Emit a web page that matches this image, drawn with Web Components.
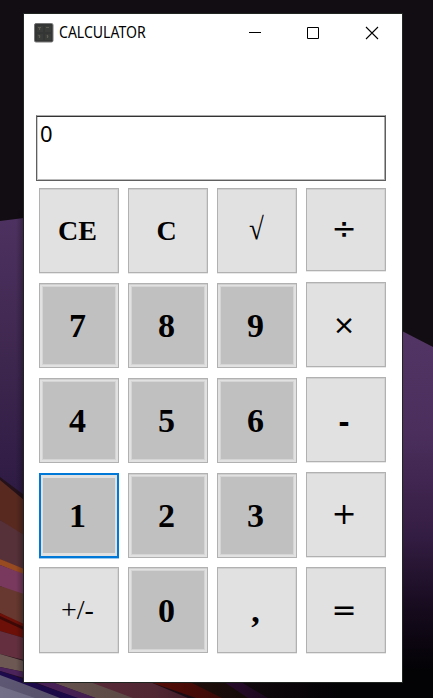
<!DOCTYPE html>
<html lang="en">
<head>
<meta charset="utf-8">
<title>CALCULATOR</title>
<style>
html,body{margin:0;width:433px;height:698px;overflow:hidden;background:#120d13}
</style>
</head>
<body>
<desk-top>
  <calc-window caption="CALCULATOR">
    <calc-display>0</calc-display>
    <calc-pad>
      <calc-column>
        <calc-key small>CE</calc-key><calc-key digit>7</calc-key><calc-key digit>4</calc-key><calc-key digit focused>1</calc-key><calc-key plain>+/-</calc-key>
      </calc-column>
      <calc-column>
        <calc-key small>C</calc-key><calc-key digit>8</calc-key><calc-key digit>5</calc-key><calc-key digit>2</calc-key><calc-key digit low>0</calc-key>
      </calc-column>
      <calc-column>
        <calc-key root>√</calc-key><calc-key digit>9</calc-key><calc-key digit>6</calc-key><calc-key digit>3</calc-key><calc-key low>,</calc-key>
      </calc-column>
      <calc-column operators>
        <calc-key op>÷</calc-key><calc-key op times>×</calc-key><calc-key op minus>-</calc-key><calc-key op>+</calc-key><calc-key op equals>=</calc-key>
      </calc-column>
    </calc-pad>
  </calc-window>
</desk-top>
<script>
const define = (name, html, init) => customElements.define(name, class extends HTMLElement {
  constructor() {
    super();
    this.attachShadow({mode: 'open'}).innerHTML = html;
  }
  connectedCallback() { if (init) init(this, this.shadowRoot); }
});

define('desk-top', `
<style>
:host{display:grid;box-sizing:border-box;width:433px;height:698px;padding:14px 31px 16px 24px;position:relative}
svg.wall{position:absolute;inset:0}
slot{display:contents}
</style>
<svg class="wall" width="433" height="698" viewBox="0 0 433 698" aria-hidden="true">
  <defs>
    <linearGradient id="l" x1="0" y1="218" x2="0" y2="500" gradientUnits="userSpaceOnUse"><stop offset="0" stop-color="#4d3160"/><stop offset=".5" stop-color="#3e274f"/><stop offset="1" stop-color="#2d1a43"/></linearGradient>
    <linearGradient id="r" x1="0" y1="332" x2="0" y2="670" gradientUnits="userSpaceOnUse"><stop offset="0" stop-color="#533565"/><stop offset=".3" stop-color="#4b2e5c"/><stop offset=".6" stop-color="#341d43"/><stop offset=".83" stop-color="#150a1c"/><stop offset="1" stop-color="#030205"/></linearGradient>
    <linearGradient id="f"><stop offset="0" stop-color="#030205" stop-opacity="0"/><stop offset=".45" stop-color="#030205" stop-opacity=".2"/><stop offset="1" stop-color="#030205"/></linearGradient>
    <linearGradient id="s"><stop offset="0" stop-color="#000" stop-opacity="0"/><stop offset="1" stop-color="#000" stop-opacity=".3"/></linearGradient>
  </defs>
  <rect width="433" height="698" fill="#120d13"/>
  <path d="M0 221L24 218V520H0Z" fill="url(#l)"/>
  <path d="M402 331L433 347V698H402Z" fill="url(#r)"/>
  <path d="M0 477L24 495L433 698H0Z" fill="#241119"/>
  <path d="M0 480L24 500V537L0 520Z" fill="#58291f"/>
  <path d="M0 520L24 535V571L0 559Z" fill="#573139"/>
  <path d="M0 559L24 569V575L0 565Z" fill="#984a20"/>
  <path d="M0 565L24 574V597L0 586Z" fill="#79395f"/>
  <path d="M0 586L24 594V627L0 613Z" fill="#66382f"/>
  <path d="M0 613L24 624L190 682L240 698H196L150 682L24 638L0 631Z" fill="#6d1008"/>
  <path d="M0 616L24 627V630L0 619Z" fill="#3c0907"/>
  <path d="M0 631L24 638L150 682L188 698H128L60 676L24 660L0 654Z" fill="#64303f"/>
  <path d="M0 654L24 661L90 682L133 698H95L24 672L0 667Z" fill="#6d5854"/>
  <path d="M0 667L24 672L96 698H76L24 678L0 671Z" fill="#4c235b"/>
  <path d="M0 671L24 679L78 698H59L24 686L0 678Z" fill="#1d0a4d"/>
  <path d="M0 675L24 684L60 698H0Z" fill="#5e5773"/>
  <path d="M0 686L35 698H0Z" fill="#746f89"/>
  <path d="M190 682H222L265 698H222Z" fill="#30150e"/>
  <path d="M224 682H241L268 698H248Z" fill="#4f1453"/>
  <rect y="682" width="340" height="16" fill="url(#f)"/>
  <rect x="339" y="682" width="94" height="16" fill="#030306"/>
  <rect x="16" y="210" width="8" height="472" fill="url(#s)"/>
  <rect x="23.5" y="13.5" width="379" height="669" fill="none" stroke="#202522"/>
</svg>
<slot></slot>`);

define('calc-window', `
<style>
:host{display:flex;flex-direction:column;background:#fff;z-index:1;min-width:0}
header{display:flex;align-items:center;height:37px;padding:0 23px 0 10px;color:#000}
.cap{font:15.5px/20px "Noto Sans","Open Sans",sans-serif;margin:-1px 0 0 5px;flex:1}
.cap span{display:inline-block;transform-origin:0 50%}
svg{display:block}
.buttons{display:flex;gap:45px}
</style>
<header>
  <svg width="20" height="20" viewBox="0 0 20 20"><rect x=".5" y=".5" width="18.5" height="18.5" rx="1.5" fill="#343635" stroke="#777"/><path d="M3 3H9V9H3ZM11 3H17V9H11ZM3 11H9V17H3ZM11 11H17V17H11Z" fill="#3a3c39"/><path d="M4 4.5H7M5.5 4V7M12 4.5H15M4.5 12L6 14M5.5 12V15M13 12L14 14M13.5 12V15" stroke="#5d5c53" stroke-width="1.2"/></svg>
  <div class="cap"><span></span></div>
  <div class="buttons">
    <svg width="14" height="14" viewBox="0 0 14 14"><path d="M2 6.5H14" stroke="#000"/></svg>
    <svg width="14" height="14" viewBox="0 0 14 14"><path d="M1.5 1.5H12.5V12.5H1.5Z" fill="none" stroke="#000"/></svg>
    <svg width="14" height="14" viewBox="0 0 14 14"><path d="M1 1L13 13M13 1L1 13" stroke="#000" stroke-width="1.1"/></svg>
  </div>
</header>
<slot></slot>`, (el, root) => {
  const span = root.querySelector('.cap span');
  span.textContent = el.getAttribute('caption');
  span.style.transform = `scaleX(${87 / span.offsetWidth})`;
});

define('calc-display', `
<style>
:host{display:block;box-sizing:border-box;height:66px;margin:64px 16px 0 12px;border:1px solid #5f5f5f;border-top-color:#aaa;box-shadow:inset 0 1px #333,inset 1px 0 #ccc,inset -1px 0 #aaa,inset 0 -1px #bbb;padding:1px 3px;font:22px/32px "Noto Sans","Open Sans",sans-serif;color:#000}
</style><slot></slot>`);

define('calc-pad', `
<style>:host{display:flex;gap:9px;margin:7px 16px 0 15px}</style><slot></slot>`);

define('calc-column', `
<style>
:host{display:grid;width:80px;grid-template-rows:95px 95px 95px 94px 86px}
:host([operators]){grid-template-rows:94px 95px 95px 95px 86px}
::slotted(*){margin-bottom:10px}
::slotted(:nth-child(4)){margin-bottom:9px}
::slotted(:last-child){margin-bottom:0}
:host([operators]) ::slotted(:first-child){margin-bottom:11px}
:host([operators]) ::slotted(:nth-child(4)){margin-bottom:10px}
</style><slot></slot>`);

define('calc-key', `
<style>
:host{display:flex;align-items:center;justify-content:center;box-sizing:border-box;border:1px solid #b1b1b1;background:#e1e1e1;box-shadow:inset 0 1px #cfcfcf,inset -1px 0 #d4d4d4,0 1px #e8e8e8;color:#000;font:bold 34px/1 "Liberation Serif",serif;padding-right:3px}
:host([digit]){background:linear-gradient(#c0c0c0,#c0c0c0) center/72px calc(100% - 6px) no-repeat #e1e1e1;box-shadow:inset 0 1px #cfcfcf,inset 0 0 0 2px #e1e1e1,inset 0 0 0 3px #d5d5d5}
:host([focused]){border:2px solid #0078d7;box-shadow:0 1px #99c9ef;padding-right:3px}
:host([low]){padding-top:2px}
:host([small]){font-size:28px}
:host([plain]){font-weight:400;font-size:28px}
:host([root]){font-weight:400;font-size:31px;padding-bottom:4px}
:host([root]) slot{display:block;transform:translateX(1px) scaleX(.87)}
:host([op]){font:400 30px/1 "DejaVu Sans",sans-serif;padding:0 4px 1px 0}
:host([times]){font-size:27px}
:host([equals]){padding-bottom:0}
:host([minus]){font:700 33px/1 "Liberation Sans",sans-serif;padding:3px 4px 0 0}
</style><slot></slot>`);
</script>
</body>
</html>
